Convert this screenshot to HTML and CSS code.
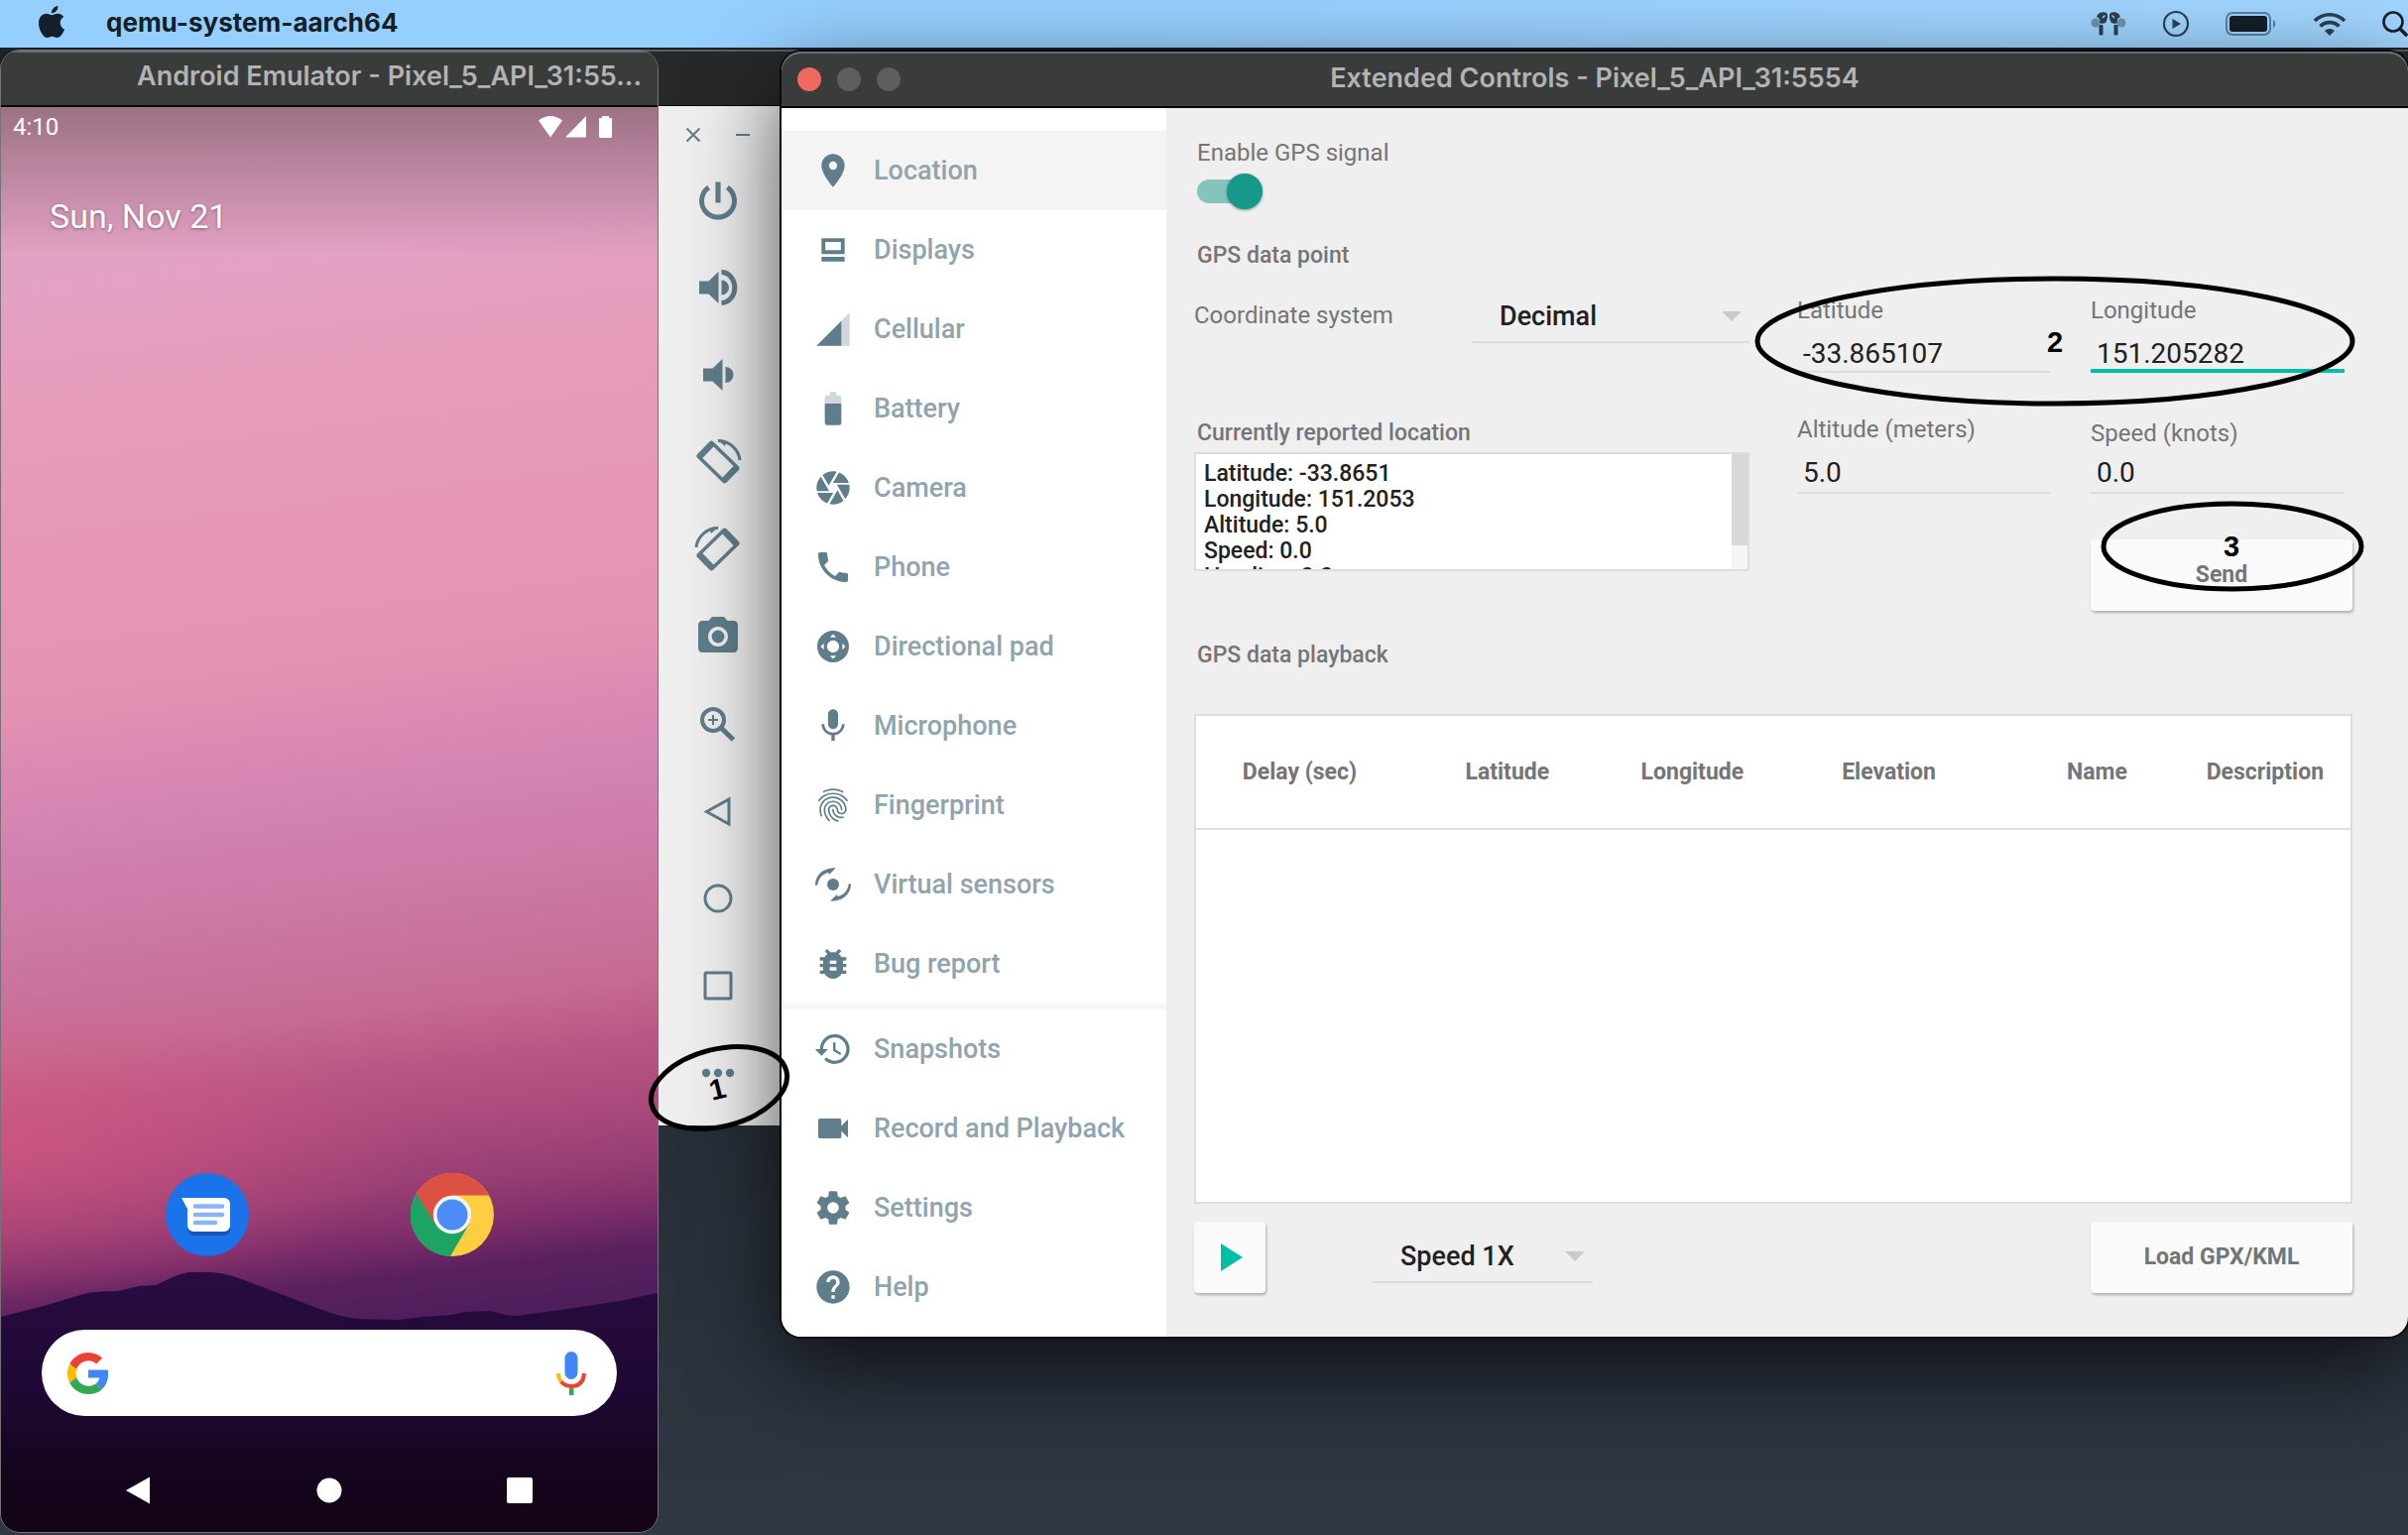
FILE: index.html
```html
<!DOCTYPE html>
<html lang="en">
<head>
<meta charset="utf-8">
<title>Android Emulator - Extended Controls</title>
<link rel="stylesheet" href="styles.css">
</head>
<body>
<header class="menubar">
  <svg class="apple" viewBox="0 0 24 24" aria-hidden="true"><path d="M12.152 6.896c-.948 0-2.415-1.078-3.96-1.04-2.04.027-3.91 1.183-4.961 3.014-2.117 3.675-.546 9.103 1.519 12.09 1.013 1.454 2.208 3.09 3.792 3.039 1.52-.065 2.09-.987 3.935-.987 1.831 0 2.35.987 3.96.948 1.637-.026 2.676-1.48 3.676-2.948 1.156-1.688 1.636-3.325 1.662-3.415-.039-.013-3.182-1.221-3.22-4.857-.026-3.04 2.48-4.494 2.597-4.559-1.429-2.09-3.623-2.324-4.39-2.376-2-.156-3.675 1.09-4.61 1.09zM15.53 3.83c.843-1.012 1.4-2.427 1.245-3.83-1.207.052-2.662.805-3.532 1.818-.78.896-1.454 2.338-1.273 3.714 1.338.104 2.715-.688 3.559-1.701"/></svg>
  <span class="app-name">qemu-system-aarch64</span>
  <div class="status">
    <svg width="36" height="28" viewBox="0 0 36 28" aria-hidden="true"><g fill="#6d93b3"><circle cx="5" cy="13" r="4.500"/><circle cx="31" cy="13" r="4.500"/></g><g fill="#2b4052"><path d="M6 7c1-4 6-6 10-4 2 2 1 7-1 10-2 1-5 1-6 0 1-3 0-5-3-6zM30 7c-1-4-6-6-10-4-2 2-1 7 1 10 2 1 5 1 6 0-1-3 0-5 3-6z"/><rect x="8.500" y="15" width="4" height="10.500" rx="1"/><rect x="23.500" y="15" width="4" height="10.500" rx="1"/></g><path d="M12 8l2.500-2.500M24 8l-2.500-2.500" stroke="#a0d4ff" stroke-width="1.500"/></svg>
    <svg width="28" height="28" viewBox="0 0 28 28" aria-hidden="true"><circle cx="14" cy="14" r="12" fill="none" stroke="#2b4052" stroke-width="2.200"/><path d="M10.500 9l8.500 5-8.500 5z" fill="#2b4052"/></svg>
    <svg width="52" height="26" viewBox="0 0 52 26" aria-hidden="true"><rect x="1" y="2" width="44" height="22" rx="6" fill="none" stroke="#5c819f" stroke-width="2"/><rect x="4" y="5" width="38" height="16" rx="3" fill="#141f29"/><path d="M48 9c3 1 3 7 0 8z" fill="#5c819f"/></svg>
    <svg width="34" height="26" viewBox="0 0 34 26" aria-hidden="true"><g fill="none" stroke="#2b4052" stroke-width="3.600"><path d="M2 10a21 21 0 0 1 30 0"/><path d="M7.500 15.500a13.500 13.500 0 0 1 19 0"/></g><path d="M12 20a7 7 0 0 1 10 0l-5 5z" fill="#2b4052"/></svg>
    <svg width="26" height="26" viewBox="0 0 26 26" aria-hidden="true"><circle cx="11" cy="11" r="9.500" fill="none" stroke="#141f29" stroke-width="2.600"/><path d="M18 18l6 6" stroke="#141f29" stroke-width="3.600" stroke-linecap="round"/></svg>
  </div>
</header>

<main class="desktop">
  <section class="toolbar-window" aria-label="Emulator toolbar">
    <div class="toolbar-title"></div>
    <div class="toolbar">
      <div class="toolbar-controls">
        <button type="button" aria-label="Close"><svg viewBox="0 0 24 24"><path d="M5.500 5.500l13 13M18.500 5.500l-13 13"/></svg></button>
        <button type="button" aria-label="Minimize"><svg viewBox="0 0 24 24"><path d="M5 12h14"/></svg></button>
      </div>
      <button class="tool" type="button" aria-label="Power"><svg viewBox="0 0 48 48"><path class="line w5" d="M14.600 11A16.500 16.500 0 1 0 33.400 11"/><path d="M21.400 5.500h5.200v21h-5.200z"/></svg></button>
      <button class="tool" type="button" aria-label="Volume up"><svg viewBox="0 0 48 48"><path d="M5 17.500h9.500L24.500 8v32l-10-9.500H5zM27.500 16.500a7.500 7.500 0 0 1 0 15z"/><path class="line w5" d="M27.500 8.500a13.300 15.500 0 0 1 0 31"/></svg></button>
      <button class="tool" type="button" aria-label="Volume down"><svg viewBox="0 0 48 48"><path d="M9 17.500h9.500l10-9.500v32l-10-9.500H9zM31.500 16a8 8 0 0 1 0 16z"/></svg></button>
      <button class="tool" type="button" aria-label="Rotate left"><svg viewBox="0 0 48 48"><path fill-rule="evenodd" transform="rotate(44 24 24)" d="M6.500 12.500h35a3 3 0 0 1 3 3v17a3 3 0 0 1-3 3h-35a3 3 0 0 1-3-3v-17a3 3 0 0 1 3-3zM10 16v16h28V16z"/><path class="line w3" d="M24 2.500A22 22 0 0 1 46 22"/><path d="M23 1l10 2-2 5z"/></svg></button>
      <button class="tool" type="button" aria-label="Rotate right"><svg viewBox="0 0 48 48"><path fill-rule="evenodd" transform="rotate(-44 24 24)" d="M6.500 12.500h35a3 3 0 0 1 3 3v17a3 3 0 0 1-3 3h-35a3 3 0 0 1-3-3v-17a3 3 0 0 1 3-3zM10 16v16h28V16z"/><path class="line w3" d="M24 2.500A22 22 0 0 0 2 22"/><path d="M25 1l-10 2 2 5z"/></svg></button>
      <button class="tool" type="button" aria-label="Take screenshot"><svg viewBox="0 0 24 24"><circle cx="12" cy="12" r="3.200"/><path d="M9 2L7.170 4H4c-1.100 0-2 .9-2 2v12c0 1.100.9 2 2 2h16c1.100 0 2-.9 2-2V6c0-1.100-.9-2-2-2h-3.170L15 2H9zm3 15c-2.760 0-5-2.240-5-5s2.240-5 5-5 5 2.240 5 5-2.240 5-5 5z"/></svg></button>
      <button class="tool" type="button" aria-label="Zoom"><svg viewBox="0 0 48 48"><circle class="line w4" cx="19" cy="20" r="11"/><path class="line w5" d="M27.500 28.500l12 11.500"/><path class="line w2" d="M14 20h10M19 15v10"/></svg></button>
      <button class="tool" type="button" aria-label="Back"><svg viewBox="0 0 48 48"><path class="line w3" d="M12.500 24.500L35 12v25z"/></svg></button>
      <button class="tool" type="button" aria-label="Home"><svg viewBox="0 0 48 48"><circle class="line w3" cx="24" cy="24" r="13"/></svg></button>
      <button class="tool" type="button" aria-label="Overview"><svg viewBox="0 0 48 48"><rect class="line w3" x="11" y="11" width="26" height="26" rx="1"/></svg></button>
      <button class="tool" type="button" aria-label="More"><svg viewBox="0 0 48 48"><circle cx="12" cy="24" r="4.200"/><circle cx="24" cy="24" r="4.200"/><circle cx="36" cy="24" r="4.200"/></svg></button>
    </div>
  </section>

  <section class="emulator" aria-label="Android Emulator">
    <div class="titlebar emulator-title"><span>Android Emulator - Pixel_5_API_31:55...</span></div>
    <div class="phone">
      <svg class="mountains" viewBox="0 0 662 262" preserveAspectRatio="none" aria-hidden="true">
        <defs><linearGradient id="hill" x1="0" y1="0" x2="0" y2="1"><stop offset="0" stop-color="#290c42"/><stop offset=".45" stop-color="#1f0833"/><stop offset=".75" stop-color="#15061f"/><stop offset="1" stop-color="#120316"/></linearGradient></defs>
        <path fill="url(#hill)" d="M0 45L43 34 87 21Q100 19 118 19L139 14 156 13 173 5Q185 0 193 0L212 0Q226 1 240 6L282 22 321 37Q345 46 360 47L401 48 425 45 455 43 468 40 494 39Q508 44 520 44L564 38 624 29 662 21V262H0z"/>
      </svg>
      <div class="phone-status">
        <time>4:10</time>
        <svg width="78" height="24" viewBox="0 0 78 24" fill="#fff" aria-hidden="true"><path d="M0 5.500Q12-3.500 24 5.500L12 22.500z"/><path d="M27 22.500L48 1v21.500z"/><path d="M61 3h3V1h7v2h3v18.500a1.500 1.500 0 0 1-1.500 1.500h-10a1.500 1.500 0 0 1-1.500-1.500z"/></svg>
      </div>
      <p class="date">Sun, Nov 21</p>
      <div class="phone-bottom">
        <div class="apps">
          <button type="button" aria-label="Messages"><svg viewBox="0 0 84 84"><circle cx="42" cy="42" r="42" fill="#1a73e8"/><path d="M22 29h37a6 6 0 0 1 6 6v22a6 6 0 0 1-6 6H28a6 6 0 0 1-6-6V35z" fill="#1557b8"/><path d="M16 25h43a6 6 0 0 1 6 6v22a6 6 0 0 1-6 6H28a6 6 0 0 1-6-6V36z" fill="#fff"/><path d="M30 33.500h27M30 42h27M30 50h20" stroke="#8ab4f8" stroke-width="4.600" stroke-linecap="round"/></svg></button>
          <button type="button" aria-label="Chrome"><svg viewBox="0 0 84 84"><circle cx="42" cy="42" r="42" fill="#ffcd40"/><path d="M5.600 20.500A42 42 0 0 0 40 84l19-32.500-17 5z" fill="#1da362"/><path d="M5.600 20.500L25 54l10 6 10-10z" fill="#1da362"/><path d="M42 22.500H79A42 42 0 0 0 5.600 20.500L24 50 42 42z" fill="#dd5144"/><circle cx="42" cy="42" r="19.200" fill="#f4f4f4"/><circle cx="42" cy="42" r="15.500" fill="#4c8bf5"/></svg></button>
        </div>
        <button class="search" type="button" aria-label="Google search">
          <svg width="42" height="42" viewBox="0 0 48 48"><path fill="#ea4335" d="M24 9.500c3.540 0 6.710 1.220 9.210 3.600l6.850-6.850C35.900 2.380 30.470 0 24 0 14.620 0 6.510 5.380 2.560 13.220l7.980 6.190C12.430 13.720 17.740 9.500 24 9.500z"/><path fill="#4285f4" d="M46.980 24.550c0-1.570-.15-3.090-.38-4.550H24v9.020h12.940c-.58 2.960-2.260 5.480-4.780 7.180l7.730 6c4.510-4.180 7.090-10.360 7.090-17.650z"/><path fill="#fbbc05" d="M10.530 28.590c-.48-1.450-.76-2.990-.76-4.590s.27-3.140.76-4.590l-7.980-6.190C.92 16.460 0 20.120 0 24c0 3.880.92 7.540 2.560 10.780l7.970-6.190z"/><path fill="#34a853" d="M24 48c6.480 0 11.930-2.130 15.890-5.810l-7.730-6c-2.150 1.450-4.920 2.300-8.160 2.300-6.260 0-11.570-4.220-13.470-9.910l-7.980 6.190C6.510 42.620 14.620 48 24 48z"/></svg>
          <svg width="32" height="44" viewBox="0 0 32 44"><rect x="9.500" y="0" width="13" height="28" rx="6.500" fill="#4285f4"/><path d="M3 22q0 6 4 9.500" fill="none" stroke="#fbbc05" stroke-width="4"/><path d="M6 30.500Q10 35 16 35q12 0 13-13" fill="none" stroke="#ea4335" stroke-width="4"/><path d="M14 37h4.500v7H14z" fill="#34a853"/></svg>
        </button>
        <nav class="navbar" aria-label="System navigation">
          <button type="button" aria-label="Back"><svg viewBox="0 0 28 28"><path d="M1 14L25 .5v27z"/></svg></button>
          <button type="button" aria-label="Home"><svg viewBox="0 0 28 28"><circle cx="14" cy="14" r="12.500"/></svg></button>
          <button type="button" aria-label="Recent apps"><svg viewBox="0 0 28 28"><rect x="1" y="1" width="26" height="26" rx="2"/></svg></button>
        </nav>
      </div>
    </div>
  </section>

  <section class="extended" aria-label="Extended Controls">
    <div class="titlebar extended-title">
      <div class="lights"><button class="close" type="button" aria-label="Close"></button><button type="button" aria-label="Minimize"></button><button type="button" aria-label="Zoom window"></button></div>
      <h1>Extended Controls - Pixel_5_API_31:5554</h1>
    </div>
    <div class="extended-body">
      <nav class="sidebar" aria-label="Categories">
        <a class="active" href="#location"><svg viewBox="0 0 24 24"><path d="M12 2C8.130 2 5 5.130 5 9c0 5.250 7 13 7 13s7-7.750 7-13c0-3.870-3.130-7-7-7zm0 9.500a2.500 2.500 0 0 1 0-5 2.500 2.500 0 0 1 0 5z"/></svg>Location</a>
        <a href="#displays"><svg viewBox="0 0 24 24"><path fill-rule="evenodd" d="M5 5h14v9.600H5zM7.300 7.200v5h9.400v-5zM5 16.200h14V19H5z"/></svg>Displays</a>
        <a href="#cellular"><svg viewBox="0 0 24 24"><path opacity=".3" d="M2 22h20V2z"/><path d="M17 7L2 22h15z"/></svg>Cellular</a>
        <a href="#battery"><svg viewBox="0 0 24 24"><path opacity=".3" d="M17 5.300c0-.7-.6-1.300-1.300-1.300H14V2h-4v2H8.300C7.600 4 7 4.600 7 5.300V9h10z"/><path d="M7 9v11.700c0 .7.600 1.300 1.300 1.300h7.400c.7 0 1.300-.6 1.300-1.300V9z"/></svg>Battery</a>
        <a href="#camera"><svg viewBox="0 0 24 24"><path d="M9.400 10.500l4.770-8.260C13.470 2.090 12.750 2 12 2c-2.400 0-4.600.85-6.320 2.250l3.660 6.350.06-.1zM21.540 9c-.92-2.920-3.150-5.260-6-6.340L11.880 9h9.660zm.26 1h-7.490l.29.5 4.760 8.250C21 16.970 22 14.610 22 12c0-.69-.07-1.350-.2-2zM8.540 12l-3.900-6.750C3.010 7.030 2 9.390 2 12c0 .69.070 1.350.2 2h7.490l-1.150-2zm-6.080 3c.92 2.920 3.150 5.260 6 6.340L12.120 15H2.460zm11.270 0l-3.900 6.760c.7.150 1.420.24 2.170.24 2.400 0 4.600-.85 6.320-2.250l-3.660-6.350-.93 1.600z"/></svg>Camera</a>
        <a href="#phone"><svg viewBox="0 0 24 24"><path d="M6.620 10.790c1.440 2.830 3.760 5.140 6.590 6.590l2.200-2.200c.27-.27.67-.36 1.020-.24 1.120.37 2.330.57 3.570.57.55 0 1 .45 1 1V20c0 .55-.45 1-1 1-9.390 0-17-7.610-17-17 0-.55.45-1 1-1h3.500c.55 0 1 .45 1 1 0 1.250.2 2.450.57 3.570.11.35.03.74-.25 1.020l-2.200 2.200z"/></svg>Phone</a>
        <a href="#dpad"><svg viewBox="0 0 24 24"><path fill-rule="evenodd" d="M12 2.400a9.600 9.600 0 1 0 0 19.200 9.600 9.600 0 0 0 0-19.200zM12 8.300a3.700 3.700 0 1 1 0 7.400 3.700 3.700 0 0 1 0-7.400zM12 4.500l1.900 1.900h-3.800zM12 19.500l1.900-1.900h-3.800zM4.500 12l1.900-1.900v3.800zM19.500 12l-1.900-1.900v3.800z"/></svg>Directional pad</a>
        <a href="#microphone"><svg viewBox="0 0 24 24"><path d="M12 14c1.660 0 3-1.340 3-3V5c0-1.660-1.340-3-3-3S9 3.340 9 5v6c0 1.660 1.340 3 3 3zM17.300 11c0 3-2.540 5.100-5.300 5.100S6.700 14 6.700 11H5c0 3.410 2.720 6.230 6 6.720V21h2v-3.280c3.280-.48 6-3.300 6-6.720h-1.700z"/></svg>Microphone</a>
        <a href="#fingerprint"><svg viewBox="0 0 24 24"><path d="M17.810 4.470c-.08 0-.16-.02-.23-.06C15.660 3.420 14 3 12.010 3c-1.980 0-3.860.47-5.570 1.410-.24.130-.54.040-.68-.2-.13-.24-.04-.55.2-.68C7.820 2.520 9.860 2 12.010 2c2.130 0 3.990.47 6.030 1.520.25.130.34.430.21.67-.09.18-.26.28-.44.28zM3.500 9.720c-.1 0-.2-.03-.29-.09-.23-.16-.28-.47-.12-.7.99-1.400 2.250-2.500 3.750-3.270C9.980 4.040 14 4.030 17.150 5.650c1.500.77 2.760 1.860 3.750 3.250.16.220.11.540-.12.700-.23.160-.54.110-.7-.12-.9-1.260-2.040-2.250-3.390-2.940-2.870-1.470-6.540-1.470-9.400.01-1.360.7-2.500 1.700-3.400 2.960-.08.140-.23.210-.39.210zm6.250 12.070c-.13 0-.26-.05-.35-.15-.87-.87-1.340-1.430-2.010-2.640-.69-1.230-1.050-2.730-1.050-4.340 0-2.970 2.540-5.390 5.660-5.390s5.660 2.420 5.660 5.390c0 .28-.22.5-.5.5s-.5-.22-.5-.5c0-2.420-2.090-4.390-4.660-4.390-2.570 0-4.660 1.970-4.660 4.390 0 1.440.32 2.770.93 3.850.64 1.150 1.080 1.640 1.850 2.420.19.200.19.510 0 .71-.11.100-.24.150-.37.150zm7.170-1.850c-1.190 0-2.240-.3-3.100-.89-1.490-1.010-2.380-2.650-2.380-4.390 0-.28.22-.5.5-.5s.5.220.5.500c0 1.410.72 2.740 1.940 3.560.71.480 1.540.71 2.540.71.240 0 .64-.03 1.040-.1.270-.05.53.130.58.410.05.270-.13.530-.41.580-.57.110-1.070.12-1.210.12zM14.910 22c-.04 0-.09-.01-.13-.02-1.590-.44-2.630-1.030-3.720-2.100-1.400-1.390-2.170-3.240-2.170-5.220 0-1.620 1.380-2.940 3.080-2.940 1.700 0 3.080 1.320 3.080 2.940 0 1.070.93 1.940 2.080 1.940s2.080-.87 2.080-1.940c0-3.770-3.250-6.830-7.250-6.830-2.840 0-5.440 1.580-6.610 4.030-.39.810-.59 1.760-.59 2.800 0 .78.070 2.010.67 3.610.1.260-.03.550-.29.640-.26.100-.55-.04-.64-.29-.49-1.310-.73-2.610-.73-3.960 0-1.200.23-2.290.68-3.240 1.330-2.790 4.280-4.600 7.510-4.600 4.550 0 8.250 3.510 8.250 7.830 0 1.620-1.380 2.940-3.080 2.940s-3.080-1.320-3.080-2.940c0-1.070-.93-1.940-2.080-1.940s-2.080.87-2.080 1.940c0 1.710.66 3.310 1.870 4.510.95.940 1.860 1.460 3.270 1.850.27.070.42.350.35.610-.05.230-.26.380-.47.380z"/></svg>Fingerprint</a>
        <a href="#sensors"><svg viewBox="0 0 24 24"><circle cx="12" cy="12" r="3.600"/><path d="M1.200 12.500C1.200 6.200 6 1.900 13.700 2L9.800 5.900 9 4.800C5.400 5.900 3 8.500 2.600 12.500zM22.800 11.500C22.800 17.800 18 22.100 10.300 22L14.200 18.100l.8 1.100c3.600-1.100 6-3.700 6.400-7.700z"/></svg>Virtual sensors</a>
        <a href="#bug"><svg viewBox="0 0 24 24"><path d="M20 8h-2.810c-.45-.78-1.070-1.450-1.820-1.960L17 4.410 15.590 3l-2.170 2.170C12.960 5.060 12.490 5 12 5c-.49 0-.96.060-1.410.17L8.410 3 7 4.410l1.620 1.630C7.880 6.550 7.260 7.220 6.810 8H4v2h2.090c-.05.330-.09.660-.09 1v1H4v2h2v1c0 .34.040.67.090 1H4v2h2.810c1.040 1.790 2.970 3 5.190 3s4.150-1.210 5.190-3H20v-2h-2.090c.05-.33.090-.66.090-1v-1h2v-2h-2v-1c0-.34-.04-.67-.09-1H20V8zm-6 8h-4v-2h4v2zm0-4h-4v-2h4v2z"/></svg>Bug report</a>
        <hr>
        <a href="#snapshots"><svg viewBox="0 0 24 24"><path d="M13 3a9 9 0 0 0-9 9H1l3.890 3.890.07.140L9 12H6a7 7 0 1 1 7 7c-1.930 0-3.680-.79-4.940-2.060l-1.420 1.420A8.950 8.950 0 0 0 13 21a9 9 0 0 0 0-18zm-1 5v5l4.280 2.540.72-1.210-3.500-2.080V8H12z"/></svg>Snapshots</a>
        <a href="#record"><svg viewBox="0 0 24 24"><path d="M17 10.500V7c0-.55-.45-1-1-1H4c-.55 0-1 .45-1 1v10c0 .55.450 1 1 1h12c.55 0 1-.45 1-1v-3.500l4 4v-11l-4 4z"/></svg>Record and Playback</a>
        <a href="#settings"><svg viewBox="0 0 24 24"><path d="M19.430 12.980c.04-.32.070-.64.070-.98s-.03-.66-.07-.98l2.110-1.650c.19-.15.240-.42.120-.64l-2-3.460c-.12-.22-.39-.3-.61-.22l-2.490 1c-.52-.4-1.080-.73-1.690-.98l-.38-2.650C14.460 2.180 14.250 2 14 2h-4c-.25 0-.46.180-.49.420l-.38 2.650c-.61.250-1.170.590-1.690.98l-2.490-1c-.23-.09-.49 0-.61.220l-2 3.460c-.13.220-.07.490.12.640l2.110 1.650c-.04.320-.07.650-.07.980s.03.660.07.980l-2.110 1.650c-.19.150-.24.420-.12.640l2 3.460c.12.220.39.300.61.220l2.490-1c.52.400 1.080.73 1.690.98l.38 2.650c.03.240.24.420.49.420h4c.25 0 .46-.18.490-.42l.38-2.650c.61-.25 1.170-.59 1.690-.98l2.490 1c.23.090.49 0 .61-.22l2-3.460c.12-.22.070-.49-.12-.64l-2.110-1.650zM12 15.500a3.500 3.500 0 0 1 0-7 3.500 3.500 0 0 1 0 7z"/></svg>Settings</a>
        <a href="#help"><svg viewBox="0 0 24 24"><path d="M12 2C6.480 2 2 6.480 2 12s4.480 10 10 10 10-4.480 10-10S17.520 2 12 2zm1 17h-2v-2h2v2zm2.070-7.750l-.9.920C13.450 12.900 13 13.500 13 15h-2v-.5c0-1.100.45-2.100 1.170-2.830l1.240-1.260c.37-.36.590-.86.590-1.410 0-1.100-.9-2-2-2s-2 .9-2 2H8c0-2.210 1.790-4 4-4s4 1.790 4 4c0 .88-.36 1.680-.93 2.250z"/></svg>Help</a>
      </nav>

      <form class="pane" id="location">
        <label class="label gps-label" for="gps">Enable GPS signal</label>
        <input class="toggle" id="gps" type="checkbox" role="switch" checked>
        <h2 class="indent">GPS data point</h2>
        <div class="point">
          <div class="point-left">
            <div class="system">
              <label class="label" for="coords">Coordinate system</label>
              <div class="select"><select id="coords"><option>Decimal</option><option>Sexagesimal</option></select></div>
            </div>
            <label class="heading indent" for="reported">Currently reported location</label>
            <div class="reported">
              <textarea id="reported" readonly>Latitude: -33.8651
Longitude: 151.2053
Altitude: 5.0
Speed: 0.0
Heading: 0.0</textarea>
              <div class="scroll"><div class="scroll-thumb"></div></div>
            </div>
          </div>
          <div class="fields">
            <div class="field"><label class="label" for="lat">Latitude</label><input id="lat" type="text" value="-33.865107"></div>
            <div class="field"><label class="label" for="lon">Longitude</label><input class="focused" id="lon" type="text" value="151.205282"></div>
            <div class="field low"><label class="label" for="alt">Altitude (meters)</label><input id="alt" type="text" value="5.0"></div>
            <div class="field low tight"><label class="label" for="speed">Speed (knots)</label><input id="speed" type="text" value="0.0"></div>
            <button class="button send" type="button">Send</button>
          </div>
        </div>
        <h2 class="indent">GPS data playback</h2>
        <table class="playback">
          <colgroup><col class="c-delay"><col class="c-lat"><col class="c-lon"><col class="c-elev"><col class="c-name"><col></colgroup>
          <thead><tr><th>Delay (sec)</th><th>Latitude</th><th>Longitude</th><th>Elevation</th><th>Name</th><th class="last">Description</th></tr></thead>
          <tbody><tr><td colspan="6"></td></tr></tbody>
        </table>
        <div class="actions">
          <button class="button play" type="button" aria-label="Play"><svg viewBox="0 0 24 28"><path d="M1 0l22 14L1 28z"/></svg></button>
          <div class="select rate"><select aria-label="Playback speed"><option>Speed 1X</option><option>Speed 2X</option></select></div>
          <button class="button load" type="button">Load GPX/KML</button>
        </div>
      </form>
    </div>
    <svg class="mark mark-two" width="606" height="132" viewBox="0 0 606 132"><ellipse cx="303" cy="66" rx="300" ry="63"/><text x="303" y="77">2</text></svg>
    <svg class="mark mark-three" width="266" height="92" viewBox="0 0 266 92"><ellipse cx="133" cy="46" rx="130" ry="43"/><text x="132" y="56">3</text></svg>
  </section>
  <svg class="mark mark-one" width="148" height="92" viewBox="0 0 148 92"><g transform="rotate(-14 74 46)"><ellipse cx="74" cy="46" rx="70" ry="39"/><text x="72" y="57">1</text></g></svg>
</main>
</body>
</html>
```
FILE: styles.css
```css
* { box-sizing: border-box; }

body {
  margin: 0;
  height: 100vh;
  display: flex;
  flex-direction: column;
  overflow: hidden;
  background: #2e3540;
  font-family: Roboto, "Liberation Sans", sans-serif;
  font-size: 23px;
  line-height: 26px;
}

button { border: 0; padding: 0; background: none; font: inherit; display: block; }
svg { display: block; }

/* Menu bar */
.menubar {
  height: 48px;
  flex: none;
  display: flex;
  align-items: center;
  padding: 0 0 0 36px;
  background: linear-gradient(90deg, #94cfff, #97d0ff 50%, #a2d6ff);
  color: #141f29;
  font-family: Inter, sans-serif;
}
.apple { width: 32px; height: 32px; margin: 0 39px 4px 0; fill: #141f29; }
.app-name { font-size: 26px; font-weight: 700; padding-bottom: 2px; }
.status { display: flex; align-items: center; gap: 36px; margin-left: auto; }

.desktop {
  position: relative;
  flex: 1;
  background: linear-gradient(#1b2127, #272d36 70%, #2f3742);
}

/* Window frames */
.titlebar {
  display: flex;
  align-items: center;
  background: #3a3b3b;
  border-bottom: 2px solid #050505;
  box-shadow: inset 0 2px #6b6c6c;
  font-family: Inter, sans-serif;
  font-size: 27px;
  font-weight: 600;
  color: #b2b3b3;
}

/* Emulator */
.emulator {
  position: absolute;
  left: 0;
  top: 2px;
  bottom: 2px;
  width: 664px;
  display: flex;
  flex-direction: column;
  border: 1px solid #77727a;
  border-radius: 20px;
  overflow: hidden;
}
.emulator-title { height: 57px; flex: none; padding: 0 0 4px 137px; white-space: nowrap; }
.phone {
  position: relative;
  flex: 1;
  display: flex;
  flex-direction: column;
  color: #fff;
  background:
    linear-gradient(rgba(0, 0, 0, .3), rgba(0, 0, 0, 0) 150px),
    radial-gradient(420px 150px at 0 1050px, rgba(222, 88, 128, .55), rgba(222, 88, 128, 0)),
    linear-gradient(173deg, #e0a2bd 0%, #e3a2c4 12%, #e79cbb 20%, #e597b5 30%, #e595b3 38%, #e28fb2 41%, #d283b2 49%, #cc78a4 56%, #c66b92 63%, #b95784 67%, #ab4b7d 71%, #983e73 75%, #802f6b 78%, #5a205e 81%, #4f1e5c 84%);
}
.mountains { position: absolute; left: 0; bottom: 0; width: 100%; height: 262px; }
.phone-status { display: flex; justify-content: space-between; align-items: center; padding: 6px 42px 0 12px; font-size: 24px; line-height: 28px; }
.date { margin: 56px 0 0 49px; font-size: 34px; line-height: 40px; text-shadow: 0 1px 3px rgba(0, 0, 0, .4); }
.phone-bottom { position: relative; margin-top: auto; }
.apps { display: flex; justify-content: space-around; padding: 0 84px; }
.apps button { width: 84px; height: 84px; }
.search {
  display: flex;
  align-items: center;
  justify-content: space-between;
  width: 580px;
  height: 87px;
  margin: 74px auto 61px;
  padding: 0 30px 0 26px;
  border-radius: 44px;
  background: #fff;
}
.navbar { display: flex; justify-content: space-between; padding: 0 125px 28px; fill: #fff; }
.navbar svg { width: 28px; height: 28px; }

/* Emulator toolbar */
.toolbar-window { position: absolute; left: 640px; top: 2px; right: 0; }
.toolbar-title { height: 57px; background: #262829; border-top: 2px solid #5a5c5d; border-bottom: 1px solid #000; }
.toolbar {
  width: 146px;
  padding: 17px 3px 29px 25px;
  display: flex;
  flex-direction: column;
  align-items: center;
  gap: 40px;
  background: #efefef;
  fill: #5f7d8a;
}
.toolbar-controls { display: flex; gap: 26px; margin-bottom: -10px; }
.toolbar-controls svg { width: 24px; height: 24px; fill: none; stroke: #5f7d8a; stroke-width: 2; }
.tool svg { width: 48px; height: 48px; }
.line { fill: none; stroke: #5f7d8a; }
.w2 { stroke-width: 2; }
.w3 { stroke-width: 3; }
.w4 { stroke-width: 4; }
.w5 { stroke-width: 5; }

/* Extended controls */
.extended {
  position: absolute;
  left: 788px;
  right: 0;
  top: 4px;
  border-radius: 20px;
  background: #efefef;
  box-shadow: 0 0 0 2px #080a0b, 0 30px 90px rgba(0, 0, 0, .68);
}
.extended-title { position: relative; height: 57px; border-radius: 20px 20px 0 0; justify-content: center; padding: 0 0 2px; }
.extended-title h1 { margin: 0; font: inherit; }
.lights { position: absolute; left: 16px; top: 16px; display: flex; gap: 16px; }
.lights button { width: 24px; height: 24px; border-radius: 50%; background: #5d5f5e; }
.lights .close { background: #ee6a5f; }
.extended-body { display: flex; }
.sidebar { width: 388px; flex: none; padding: 23px 0 10px; background: #fff; border-radius: 0 0 0 20px; }
.sidebar a {
  display: flex;
  align-items: center;
  gap: 21px;
  height: 80px;
  padding-left: 32px;
  color: #90a4ae;
  font-size: 27px;
  font-weight: 500;
  text-decoration: none;
}
.sidebar .active { background: #f4f4f4; }
.sidebar svg { width: 40px; height: 40px; fill: #607d8b; }
.sidebar hr { height: 6px; margin: 0; border: 0; background: #f7f7f7; }

.pane { flex: 1; padding: 32px 56px 42px 28px; }
.label { color: #757575; font-size: 24px; }
.heading, h2 { display: block; margin: 0; color: #757575; font-size: 23px; font-weight: 500; line-height: 26px; }
.indent { padding-left: 3px; }
.gps-label { display: block; padding-left: 3px; }
.toggle {
  appearance: none;
  display: flex;
  align-items: center;
  justify-content: flex-end;
  width: 66px;
  height: 24px;
  margin: 14px 0 40px 3px;
  border-radius: 12px;
  background: #85c4bc;
}
.toggle::before { content: ""; width: 36px; height: 36px; flex: none; border-radius: 50%; background: #16998a; box-shadow: 0 1px 3px rgba(0, 0, 0, .4); }
.point { display: flex; gap: 48px; margin: 23px 0 32px; }
.point-left { flex: 1; }
.system { display: flex; align-items: center; justify-content: space-between; margin-bottom: 78px; }
.system .label { padding-bottom: 4px; }
.select { display: grid; align-items: center; width: 280px; border-bottom: 2px solid #ddd; }
.select select {
  grid-area: 1 / 1;
  appearance: none;
  width: 100%;
  height: 50px;
  border: 0;
  padding: 0 28px;
  background: none;
  color: #212121;
  font: 500 27px Roboto, sans-serif;
}
.select::after {
  content: "";
  grid-area: 1 / 1;
  justify-self: end;
  margin-right: 8px;
  border: 10px solid transparent;
  border-top-color: #c7cbcd;
  border-bottom: 0;
  pointer-events: none;
}
.reported { display: flex; height: 120px; margin-top: 6px; border: 2px solid #ddd; background: #fff; }
.reported textarea {
  flex: 1;
  border: 0;
  margin: 0;
  padding: 7px 8px 0;
  resize: none;
  overflow: hidden;
  background: none;
  color: #212121;
  font: 500 23px/26px Roboto, sans-serif;
}
.scroll { width: 16px; background: #f5f5f5; }
.scroll-thumb { height: 92px; background: #d8d8d8; }
.fields { display: grid; grid-template-columns: 256px 264px; grid-template-rows: 76px 78px 74px; row-gap: 44px; column-gap: 40px; padding-top: 6px; }
.field { display: flex; flex-direction: column; justify-content: flex-end; gap: 12px; }
.field input {
  width: 256px;
  height: 38px;
  border: 0;
  border-bottom: 2px solid #ddd;
  padding: 0 6px;
  background: none;
  outline: 0;
  color: #212121;
  font: 28px Roboto, sans-serif;
}
.field .focused { border-bottom: 4px solid #00bfa5; padding-top: 2px; }
.low { gap: 14px; }
.low input { padding-bottom: 4px; }
.tight { gap: 10px; }
.button {
  display: flex;
  align-items: center;
  justify-content: center;
  height: 72px;
  border-radius: 4px;
  background: #fafafa;
  box-shadow: 1px 2px 3px rgba(0, 0, 0, .28);
  color: #757575;
  font-weight: 700;
}
.send { grid-column: 2; align-self: end; }
.playback { width: 100%; height: 494px; margin: 46px 0 18px; border: 2px solid #ddd; border-collapse: collapse; table-layout: fixed; background: #fff; color: #757575; }
.playback th { height: 115px; padding: 0; border-bottom: 2px solid #ddd; font-weight: 700; }
.playback .last { padding-right: 10px; }
.playback td { padding: 0; }
.c-delay, .c-lat { width: 18%; }
.c-lon { width: 14%; }
.c-elev { width: 20%; }
.c-name { width: 16%; }
.actions { display: flex; align-items: center; }
.play { width: 72px; padding-left: 4px; }
.play svg { width: 24px; height: 28px; fill: #00bfa5; }
.rate { width: 222px; margin-left: 108px; }
.load { width: 264px; margin-left: auto; }

/* Hand-drawn step markers */
.mark { position: absolute; pointer-events: none; fill: none; stroke: #000; stroke-width: 5; }
.mark text { fill: #000; stroke: none; font: 700 29px "Liberation Sans", sans-serif; text-anchor: middle; }
.mark-one { left: 651px; top: 1003px; }
.mark-two { right: 53px; top: 226px; }
.mark-three { right: 44px; top: 453px; }
```
